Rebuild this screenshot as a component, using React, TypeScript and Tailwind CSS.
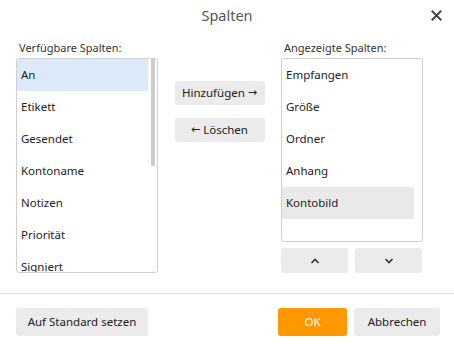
import React from "react";

const left = ["An", "Etikett", "Gesendet", "Kontoname", "Notizen", "Priorität", "Signiert"];
const right = ["Empfangen", "Größe", "Ordner", "Anhang", "Kontobild"];

const arrow = { fontFamily: '"DejaVu Sans", sans-serif', fontSize: "11px" };

export default function App() {
  return (
    <div
      className="relative w-[454px] h-[344px] bg-white text-[#222] overflow-hidden"
      style={{ fontFamily: '"Noto Sans", "Open Sans", sans-serif' }}
    >
      <div className="h-[32px] flex items-center justify-center text-[14.5px] text-[#555]">Spalten</div>
      <button className="absolute left-[430px] top-[9px] w-[12px] h-[12px] flex items-center justify-center">
        <svg width="11" height="11" viewBox="0 0 11 11">
          <path d="M1.5 1.5 L9.5 9.5 M9.5 1.5 L1.5 9.5" stroke="#444" strokeWidth="2" strokeLinecap="square" />
        </svg>
      </button>

      <div className="flex pl-[16px] pt-[6px] h-[261px]">
        <div className="w-[142px] flex flex-col">
          <div className="h-[20px] pl-[3px] text-[11px] text-[#333] leading-[20px]">Verfügbare Spalten:</div>
          <div className="h-[215px] border border-[#d0d0d0] rounded-[3px] flex overflow-hidden">
            <div className="flex-1 flex flex-col">
              {left.map((t, i) => (
                <div
                  key={t}
                  className={`h-[32px] shrink-0 flex items-center pl-[4px] text-[11.5px] ${i === 0 ? "bg-[#dbe9f9]" : ""}`}
                >
                  {t}
                </div>
              ))}
            </div>
            <div className="w-[9px] shrink-0 pl-[3px]">
              <div className="w-[4px] h-[107px] bg-[#cdcdcd]" />
            </div>
          </div>
        </div>

        <div className="w-[123px] flex flex-col items-center pt-[43px] gap-[13px]">
          <button className="w-[90px] h-[24px] rounded-[3px] bg-[#ebebeb] text-[11.5px] text-[#222] flex items-center justify-center gap-[3px]">
            <span>Hinzufügen</span>
            <span style={arrow}>→</span>
          </button>
          <button className="w-[90px] h-[24px] rounded-[3px] bg-[#ebebeb] text-[11.5px] text-[#222] flex items-center justify-center gap-[3px]">
            <span style={arrow}>←</span>
            <span>Löschen</span>
          </button>
        </div>

        <div className="w-[142px] flex flex-col">
          <div className="h-[20px] pl-[3px] text-[11px] text-[#333] leading-[20px]">Angezeigte Spalten:</div>
          <div className="h-[184px] border border-[#d0d0d0] rounded-[3px] flex overflow-hidden">
            <div className="w-[132px] flex flex-col">
              {right.map((t, i) => (
                <div
                  key={t}
                  className={`h-[32px] shrink-0 flex items-center pl-[4px] text-[11.5px] ${i === 4 ? "bg-[#e9e9e9]" : ""}`}
                >
                  {t}
                </div>
              ))}
            </div>
          </div>
          <div className="flex gap-[7px] mt-[6px]">
            <button className="w-[67px] h-[25px] rounded-[3px] bg-[#ebebeb] flex items-center justify-center">
              <svg width="10" height="6" viewBox="0 0 10 6">
                <path d="M1.5 5 L5 1.5 L8.5 5" stroke="#333" strokeWidth="1.6" fill="none" />
              </svg>
            </button>
            <button className="w-[67px] h-[25px] rounded-[3px] bg-[#ebebeb] flex items-center justify-center">
              <svg width="10" height="6" viewBox="0 0 10 6">
                <path d="M1.5 1 L5 4.5 L8.5 1" stroke="#333" strokeWidth="1.6" fill="none" />
              </svg>
            </button>
          </div>
        </div>
      </div>

      <div className="h-px bg-[#e0e0e0]" />

      <div className="flex items-center pl-[16px] pr-[14px] pt-[14px]">
        <button className="w-[132px] h-[28px] rounded-[3px] bg-[#ebebeb] text-[11.5px] text-[#222]">
          Auf Standard setzen
        </button>
        <div className="flex-1" />
        <button className="w-[69px] h-[28px] rounded-[3px] bg-[#ff9800] text-[11.5px] text-white">OK</button>
        <button className="ml-[7px] w-[86px] h-[28px] rounded-[3px] bg-[#ebebeb] text-[11.5px] text-[#222]">
          Abbrechen
        </button>
      </div>
    </div>
  );
}
